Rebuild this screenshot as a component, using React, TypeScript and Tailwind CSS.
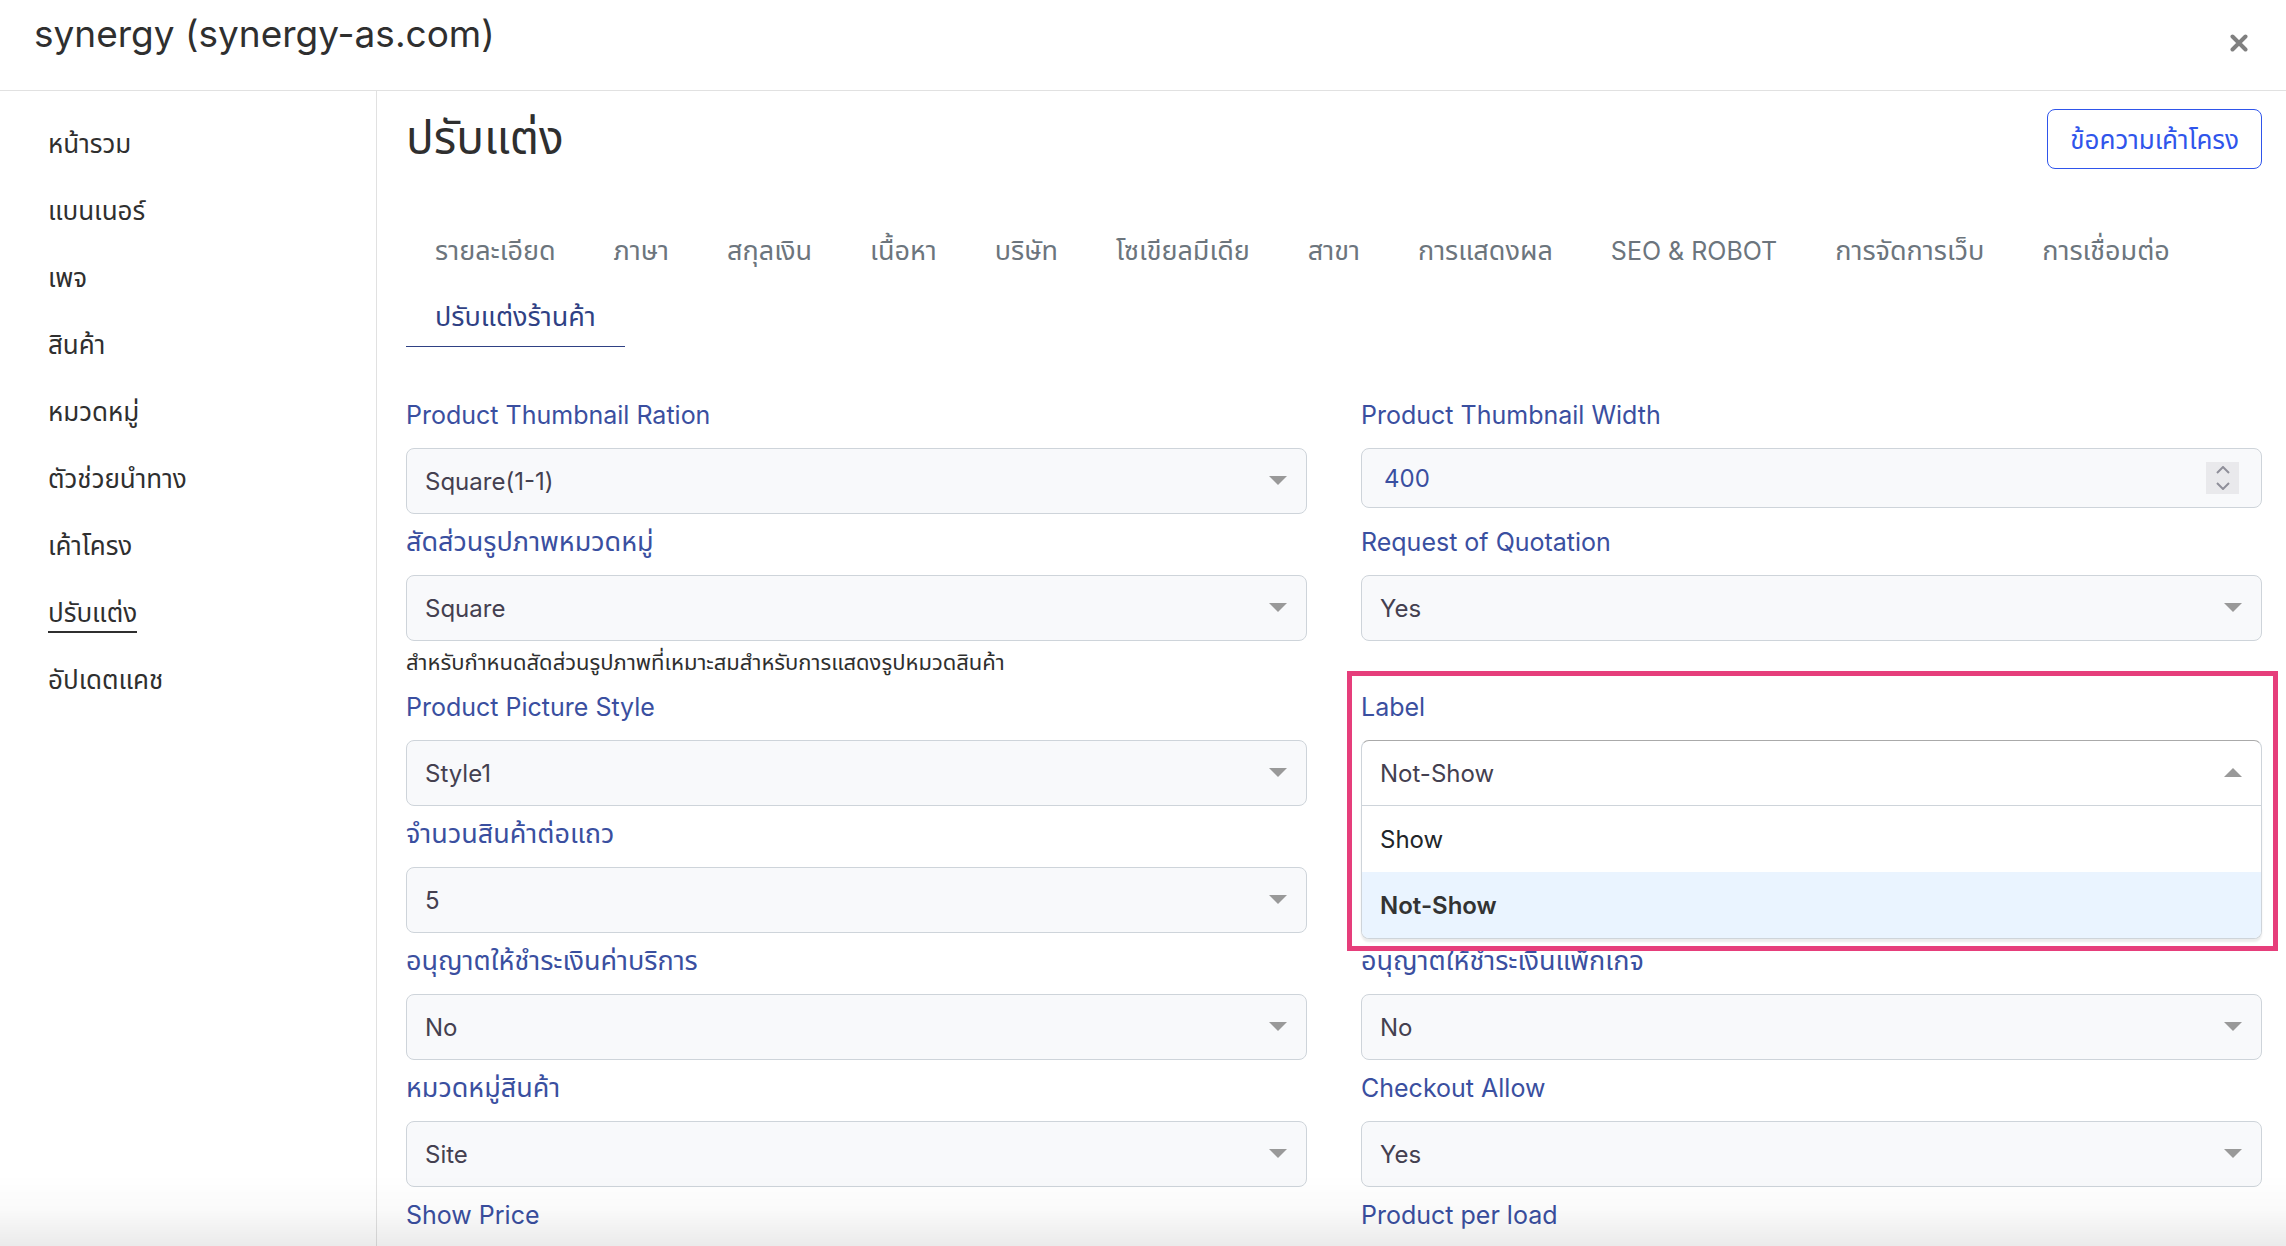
import { ReactNode, useState } from 'react'
import { twMerge } from 'tailwind-merge'

const BOX_CLASSNAME =
  'w-full rounded-lg border border-[#ced4da] bg-[#f8f9fb] text-2xl'

const MENU = [
  'หน้ารวม',
  'แบนเนอร์',
  'เพจ',
  'สินค้า',
  'หมวดหมู่',
  'ตัวช่วยนำทาง',
  'เค้าโครง',
  'ปรับแต่ง',
  'อัปเดตแคช',
]

const TABS = [
  'รายละเอียด',
  'ภาษา',
  'สกุลเงิน',
  'เนื้อหา',
  'บริษัท',
  'โซเขียลมีเดีย',
  'สาขา',
  'การแสดงผล',
  'SEO & ROBOT',
  'การจัดการเว็บ',
  'การเชื่อมต่อ',
  'ปรับแต่งร้านค้า',
]

// Thai glyphs look smaller than latin ones at the same size
function textSize(text: string) {
  return /[ก-๙]/.test(text) ? 'text-[27px]' : 'text-[25px]'
}

function Arrow({ up = false }: { up?: boolean }) {
  return (
    <svg
      viewBox="0 0 18 9"
      className={twMerge(
        'pointer-events-none absolute right-5 top-7 h-[9px] w-[18px] fill-[#999999]',
        up && 'rotate-180',
      )}
    >
      <path d="M0 0h18L9 9z" />
    </svg>
  )
}

interface FieldProps {
  id: string
  label: string
  hint?: string
  children: ReactNode
}

function Field({ id, label, hint, children }: FieldProps) {
  return (
    <div className="min-w-0">
      <label
        htmlFor={id}
        className={twMerge(
          'flex h-[61px] items-center pb-1 text-[#3a4fa0]',
          textSize(label),
        )}
      >
        {label}
      </label>
      {children}
      {hint && (
        <p className="flex h-[38px] items-center pt-1 text-[22px] text-[#2f2f2f]">
          {hint}
        </p>
      )}
    </div>
  )
}

interface SelectFieldProps {
  id: string
  label: string
  options?: string[]
  hint?: string
}

function SelectField({ id, label, options = [], hint }: SelectFieldProps) {
  return (
    <Field id={id} label={label} hint={hint}>
      <div className="relative">
        <select
          id={id}
          className={twMerge(
            BOX_CLASSNAME,
            'block h-[66px] appearance-none pl-[18px] pr-14 pt-0.5 text-[#444050]',
          )}
        >
          {options.map((option) => (
            <option key={option}>{option}</option>
          ))}
        </select>
        <Arrow />
      </div>
    </Field>
  )
}

function NumberField({ id, label }: { id: string; label: string }) {
  const [value, setValue] = useState(400)

  return (
    <Field id={id} label={label}>
      <div
        className={twMerge(BOX_CLASSNAME, 'flex h-[60px] items-center pr-[22px]')}
      >
        <input
          id={id}
          type="number"
          value={value}
          onChange={(e) => setValue(Number(e.target.value))}
          className="min-w-0 flex-1 appearance-none bg-transparent pl-[22px] pt-0.5 text-[#3a4fa0] outline-none [&::-webkit-inner-spin-button]:appearance-none"
        />
        <div className="flex h-8 w-[33px] flex-col bg-[#e9e9ec] text-[#8f8f9a]">
          <button
            type="button"
            aria-label="Increase"
            onClick={() => setValue(value + 1)}
            className="flex flex-1 items-center justify-center"
          >
            <svg viewBox="0 0 14 8" className="h-2 w-3.5" fill="none">
              <path d="M1 7l6-6 6 6" stroke="currentColor" strokeWidth="2" />
            </svg>
          </button>
          <button
            type="button"
            aria-label="Decrease"
            onClick={() => setValue(value - 1)}
            className="flex flex-1 items-center justify-center"
          >
            <svg viewBox="0 0 14 8" className="h-2 w-3.5" fill="none">
              <path d="M1 1l6 6 6-6" stroke="currentColor" strokeWidth="2" />
            </svg>
          </button>
        </div>
      </div>
    </Field>
  )
}

function OpenSelectField({ id, label }: { id: string; label: string }) {
  const [value, setValue] = useState('Not-Show')
  const [open, setOpen] = useState(true)

  return (
    <div className="relative">
      <Field id={id} label={label}>
        <div className="relative">
          <button
            id={id}
            type="button"
            role="combobox"
            aria-expanded={open}
            aria-controls="label-options"
            onClick={() => setOpen(!open)}
            className="block h-[66px] w-full rounded-t-lg border border-[#ced4da] border-t-[#aaaaaa] bg-white px-[18px] pt-0.5 text-left text-2xl text-[#444050]"
          >
            {value}
          </button>
          <Arrow up={open} />
          {open && (
            <ul
              id="label-options"
              role="listbox"
              className="absolute inset-x-0 top-full z-10 overflow-hidden rounded-b-lg border border-t-0 border-[#ced4da] bg-white text-2xl text-[#212529] shadow-[0_3px_2px_rgba(0,0,0,0.08)]"
            >
              {['Show', 'Not-Show'].map((option) => (
                <li
                  key={option}
                  role="option"
                  aria-selected={option === value}
                  onClick={() => setValue(option)}
                  className={twMerge(
                    'flex h-[66px] items-center px-[18px] pt-0.5',
                    option === value && 'bg-[#eaf4ff] font-semibold text-[#333333]',
                  )}
                >
                  {option}
                </li>
              ))}
            </ul>
          )}
        </div>
      </Field>
      <div className="pointer-events-none absolute -left-3.5 -right-4 -top-2 z-20 h-[280px] border-5 border-[#e63e7b]" />
    </div>
  )
}

export default function App() {
  return (
    <div className="flex h-screen flex-col overflow-hidden bg-white font-['Inter','Noto_Sans_Thai','Noto_Sans',sans-serif] text-[#2f2f2f]">
      <header className="flex h-[91px] shrink-0 items-start justify-between border-b border-[#e1e1e1] pl-[34px] pr-[38px]">
        <h1 className="pt-3 text-[37px] leading-[44px]">
          synergy (synergy-as.com)
        </h1>
        <button type="button" aria-label="Close" className="pt-[34px]">
          <svg viewBox="0 0 18 18" className="size-[18px]" fill="none">
            <path
              d="M2.500 2.500l13 13M15.500 2.500l-13 13"
              stroke="#808080"
              strokeWidth="4"
              strokeLinecap="round"
            />
          </svg>
        </button>
      </header>

      <div className="flex min-h-0 flex-1">
        <nav className="flex w-[377px] shrink-0 flex-col items-start border-r border-[#e1e1e1] pl-12 pt-5">
          {MENU.map((item) => (
            <div key={item} className="flex h-[67px] items-center">
              <a
                href="#"
                className={twMerge(
                  'border-b-2 border-transparent text-[26px] leading-9',
                  item === 'ปรับแต่ง' && 'border-[#2f2f2f]',
                )}
              >
                {item}
              </a>
            </div>
          ))}
        </nav>

        <main className="min-w-0 flex-1 pl-[29px] pr-6">
          <div className="flex h-[124px] items-start justify-between pt-[18px]">
            <h2 className="text-[46px] leading-[56px]">ปรับแต่ง</h2>
            <button
              type="button"
              className="h-[60px] rounded-lg border border-[#2f55eb] px-[22px] text-[26px] text-[#2f55eb]"
            >
              ข้อความเค้าโครง
            </button>
          </div>

          <div className="flex flex-wrap text-[#6c757d]">
            {TABS.map((tab) => (
              <a
                key={tab}
                href="#"
                className={twMerge(
                  'flex h-[66px] items-center border-b border-transparent px-[29px] pt-2',
                  textSize(tab),
                  tab === 'ปรับแต่งร้านค้า' && 'border-[#2f4184] text-[#2f4184]',
                )}
              >
                {tab}
              </a>
            ))}
          </div>

          <form className="grid grid-cols-2 gap-x-[54px] pt-10">
            <SelectField
              id="ratio"
              label="Product Thumbnail Ration"
              options={['Square(1-1)']}
            />
            <NumberField id="width" label="Product Thumbnail Width" />
            <SelectField
              id="category-ratio"
              label="สัดส่วนรูปภาพหมวดหมู่"
              options={['Square']}
              hint="สำหรับกำหนดสัดส่วนรูปภาพที่เหมาะสมสำหรับการแสดงรูปหมวดสินค้า"
            />
            <SelectField
              id="quotation"
              label="Request of Quotation"
              options={['Yes', 'No']}
            />
            <SelectField
              id="picture-style"
              label="Product Picture Style"
              options={['Style1']}
            />
            <OpenSelectField id="label" label="Label" />
            <SelectField id="per-row" label="จำนวนสินค้าต่อแถว" options={['5']} />
            <div />
            <SelectField
              id="service-pay"
              label="อนุญาตให้ชำระเงินค่าบริการ"
              options={['No', 'Yes']}
            />
            <SelectField
              id="package-pay"
              label="อนุญาตให้ชำระเงินแพ็กเกจ"
              options={['No', 'Yes']}
            />
            <SelectField
              id="product-category"
              label="หมวดหมู่สินค้า"
              options={['Site']}
            />
            <SelectField
              id="checkout"
              label="Checkout Allow"
              options={['Yes', 'No']}
            />
            <SelectField id="show-price" label="Show Price" />
            <SelectField id="per-load" label="Product per load" />
          </form>
        </main>
      </div>

      <div className="pointer-events-none fixed inset-x-0 bottom-0 h-18 bg-linear-to-b from-transparent via-black/2 to-black/8" />
    </div>
  )
}
